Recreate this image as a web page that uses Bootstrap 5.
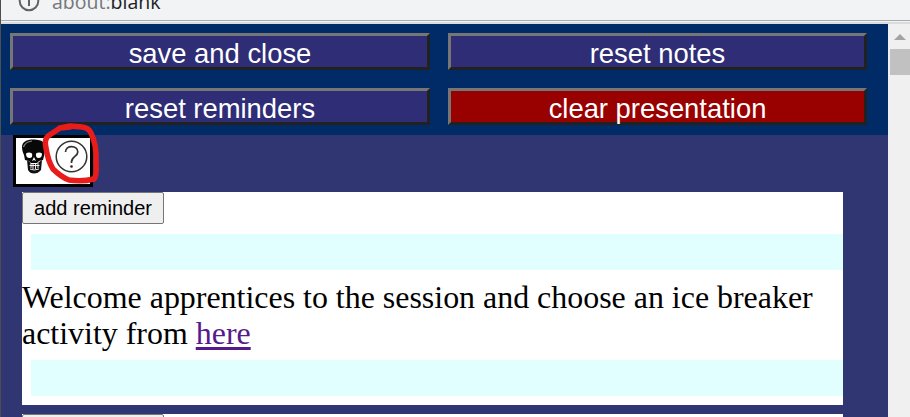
<!DOCTYPE html>
<html lang="en">
<head>
<meta charset="utf-8">
<meta name="viewport" content="width=device-width, initial-scale=1">
<title>Notes</title>
<link href="https://cdn.jsdelivr.net/npm/bootstrap@5.3.0/dist/css/bootstrap.min.css" rel="stylesheet">
<style>
body{height:417px;background:#303672;font-family:"Liberation Sans",Arial,sans-serif;color:#000}
.window{height:417px;border-left:1px solid #4d4e50}
.address{height:24px;background:#f1f3f4;border-bottom:2px solid #dadce0;box-shadow:inset 0 -1px #f1f3f4,inset 0 -2px #a9abad;padding-left:17px;flex:none}
.address svg{flex:none;margin-top:-10px}
.url{font:19.5px/24px "Open Sans","Noto Sans",sans-serif;color:#74777b;margin:-10px 0 0 12px}
.url span{color:#202124}
.page-area{min-height:0}
.toolbar-grid{background:#002b66;height:111px;padding:9px 21px 10px 9px;display:grid;grid-template-columns:420px 419px;gap:18px;grid-auto-rows:37px}
.action{border:3px solid;border-color:#767676 #212121 #212121 #767676;border-radius:0;background:#2e2d75;color:#fff;font-size:27.4px;line-height:31px;padding:2px 0 0;text-align:center;white-space:nowrap;display:block}
.action.danger{background:#900}
.tools{width:80px;height:52px;border:3px solid #000;background:#fff;margin-left:12px;position:relative}
.tools svg{display:block;position:absolute;left:-3px;top:-16px}
.reminder{background:#fff;width:821px;height:213px;margin:5px 0 9px 21px;flex:none}
.add{height:32px;width:142px;border:1px solid #767676;border-radius:2px;background:#efefef;font-size:20px;line-height:30px;padding:0;display:block;text-align:center;color:#000}
.strip{height:36px;background:#e2ffff;margin-left:9px}
.note{font:31.93px/36px "Liberation Serif","Times New Roman",serif;margin:10px 0 8px;height:72px;white-space:nowrap}
.note a{color:#551a8b;text-decoration-thickness:3px;text-underline-offset:3px}
.scroller{width:22px;background:#f0f0f0;padding-left:2px;flex:none}
.arrow{width:0;height:0;border:6px solid transparent;border-top:0;border-bottom-color:#a3a3a3;margin:10px 0 9px 4px}
.thumb{height:26px;background:#c1c1c1}
</style>
<script src="https://cdn.jsdelivr.net/npm/bootstrap@5.3.0/dist/js/bootstrap.bundle.min.js"></script>
</head>
<body class="overflow-hidden">
<div class="window d-flex flex-column overflow-hidden">
  <header class="address d-flex align-items-start">
    <svg width="22" height="22" viewBox="0 0 22 22" fill="none" stroke="#5f6368" stroke-width="2"><circle cx="11" cy="11" r="9.300"/><path d="M11 10v6M11 6v2"/></svg>
    <div class="url">about:<span>blank</span></div>
  </header>
  <div class="page-area d-flex flex-grow-1">
    <main class="flex-grow-1 d-flex flex-column overflow-hidden">
      <div class="toolbar-grid flex-shrink-0">
        <button class="action">save and close</button>
        <button class="action">reset notes</button>
        <button class="action">reset reminders</button>
        <button class="action danger">clear presentation</button>
      </div>
      <div class="tools flex-shrink-0">
        <svg width="90" height="66" viewBox="13 122 90 66">
          <path fill="#080808" d="M22 147C22 142 26 139.500 34 139.500C42 139.500 46 143 46 148C46 151 44 153 44 156L43 160L39 161L37 163H31L29 161L25 160L24 155C23 153 22 150 22 147Z"/>
          <path fill="#fff" d="M26 153.500Q29 151.500 32 153.500Q33 158 29.500 158Q26 158 26 153.500ZM36 153.500Q39 151.500 42 153.500Q42 158 38.500 158Q35.500 158 36 153.500ZM34 157L36 161L34 160L32 161Z"/>
          <path fill="none" stroke="#888" stroke-width="1.200" d="M23.500 147Q25 142 32 141"/>
          <path fill="#111" d="M27 160L30 162L31 164H37L39 162L42 160L41 170Q38 173.500 34 173.500Q30 173.500 28 170Z"/>
          <path stroke="#fff" stroke-width=".9" fill="none" d="M31 163V168M33 163V169M35.500 163V169M38 163V168M29.500 165.500H39.500M30 169Q34 171 39 169"/>
          <circle cx="71.500" cy="156.500" r="15.300" fill="#fff" stroke="#333" stroke-width="1.500"/>
          <path fill="none" stroke="#333" stroke-width="1.700" d="M65.500 152C65.500 144.500 77.800 145 77.800 152C77.800 156.500 71.500 156.500 71.500 162V163"/>
          <circle cx="71.500" cy="166.500" r="1.300" fill="#222"/>
          <path fill="none" stroke="#e91c1c" stroke-width="5.500" stroke-linecap="round" stroke-linejoin="round" d="M70 127L60 128L48 136Q44 140 46 148Q48 161 53 169Q61 177 69 180Q82 182 94 179Q97 175 96 163Q97 145 91 133Q89 128 82 127L70 126L60 128"/>
        </svg>
      </div>
      <section class="reminder">
        <button class="add">add reminder</button>
        <div class="pt-2"><div class="strip mt-1 position-relative" style="top:-2px"></div></div>
        <p class="note mt-2">Welcome apprentices to the session and choose an ice breaker<br>activity from <a href="#">here</a></p>
        <div class="strip mt-2"></div>
      </section>
      <section class="reminder mt-0"><button class="add">add reminder</button></section>
    </main>
    <aside class="scroller"><div class="arrow"></div><div class="thumb"></div></aside>
  </div>
</div>
</body>
</html>
